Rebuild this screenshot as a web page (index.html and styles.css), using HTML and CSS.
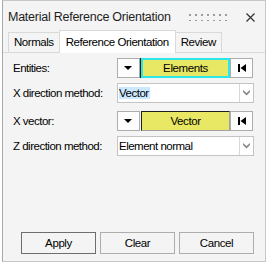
FILE: index.html
```html
<!DOCTYPE html>
<html>
<head>
    <title>Material Reference Orientation</title>
    <link rel="stylesheet" href="styles.css">
</head>
<body>
    <div class="window">
        <div class="titlebar">
            <span class="title">Material Reference Orientation</span>
            <span class="grip"></span>
            <svg class="close" width="9" height="9" viewBox="0 0 9 9">
                <path d="M0.5 0.5 L8.5 8.5 M8.5 0.5 L0.5 8.5" stroke="#333" stroke-width="1.2"/>
            </svg>
        </div>

        <div class="tabs">
            <div class="tab">Normals</div>
            <div class="tab active">Reference Orientation</div>
            <div class="tab">Review</div>
        </div>

        <div class="panel">
            <div class="row">
                <label>Entities:</label>
                <div class="picker">
                    <button class="drop"><span class="tri"></span></button>
                    <button class="entity selected">Elements</button>
                    <button class="reset">
                        <svg width="8" height="8" viewBox="0 0 8 8"><rect x="0" y="0" width="2" height="8" fill="#000"/><path d="M8 0 L2.5 4 L8 8 Z" fill="#000"/></svg>
                    </button>
                </div>
            </div>
            <div class="row gap-wide">
                <label>X direction method:</label>
                <div class="combo">
                    <span class="value"><span class="highlight">Vector</span></span>
                    <span class="arrow">
                        <svg width="7" height="6" viewBox="0 0 7 6"><path d="M0 0 L3.5 3 L7 0 L7 2 L3.5 5.5 L0 2 Z" fill="#8a8a8a"/></svg>
                    </span>
                </div>
            </div>
            <div class="row">
                <label>X vector:</label>
                <div class="picker">
                    <button class="drop"><span class="tri"></span></button>
                    <button class="entity">Vector</button>
                    <button class="reset">
                        <svg width="8" height="8" viewBox="0 0 8 8"><rect x="0" y="0" width="2" height="8" fill="#000"/><path d="M8 0 L2.5 4 L8 8 Z" fill="#000"/></svg>
                    </button>
                </div>
            </div>
            <div class="row">
                <label>Z direction method:</label>
                <div class="combo">
                    <span class="value">Element normal</span>
                    <span class="arrow">
                        <svg width="7" height="6" viewBox="0 0 7 6"><path d="M0 0 L3.5 3 L7 0 L7 2 L3.5 5.5 L0 2 Z" fill="#8a8a8a"/></svg>
                    </span>
                </div>
            </div>

            <div class="actions">
                <button class="btn default">Apply</button>
                <button class="btn">Clear</button>
                <button class="btn">Cancel</button>
            </div>
        </div>
    </div>
</body>
</html>
```

FILE: styles.css
```css
* {
    box-sizing: border-box;
}
body {
    margin: 0;
    background: #ffffff;
    font-family: "Liberation Sans", Arial, sans-serif;
    font-size: 11.5px;
    color: #000;
}
.window {
    width: 264px;
    height: 262px;
    margin-left: 2px;
    border: 1px solid #c8c8c8;
    border-left-color: #a8a8a8;
    background: #f4f4f4;
    display: flex;
    flex-direction: column;
}
.titlebar {
    height: 29px;
    display: flex;
    align-items: center;
    padding: 2px 0 0 5px;
}
.title {
    font-size: 12.5px;
    color: #1e1e1e;
    letter-spacing: -0.25px;
}
.grip {
    margin-left: auto;
    width: 40px;
    height: 8px;
    margin-top: 1px;
    background-image: radial-gradient(circle, #9a9a9a 1px, transparent 1.2px);
    background-size: 6px 6px;
    background-position: -2px -1px;
}
.close {
    margin: 1px 10px 0 17px;
}
.tabs {
    display: flex;
    align-items: flex-end;
    padding-left: 5px;
    height: 22px;
    position: relative;
    z-index: 1;
}
.tab {
    height: 20px;
    padding: 0 5px;
    border: 1px solid #d9d9d9;
    border-bottom: none;
    background: #f4f4f4;
    line-height: 19px;
    letter-spacing: -0.45px;
}
.tab + .tab {
    margin-left: -1px;
}
.tab.active {
    height: 23px;
    background: #ffffff;
    padding: 0 6px;
    line-height: 22px;
    margin-bottom: -1px;
}
.panel {
    flex: 1;
    border-top: 1px solid #d9d9d9;
    padding: 5px 11px 7px 10px;
    display: flex;
    flex-direction: column;
}
.row {
    display: flex;
    align-items: center;
    height: 20px;
    margin-bottom: 5px;
}
.row.gap-wide {
    margin-bottom: 8px;
}
.row label {
    width: 104px;
    letter-spacing: -0.5px;
}
.picker {
    display: flex;
    height: 20px;
    width: 136px;
}
.picker button {
    height: 20px;
    border: 1px solid #adadad;
    background: #fdfdfd;
    padding: 0;
    font-family: inherit;
}
.drop {
    width: 23px;
    display: flex;
    align-items: center;
    justify-content: center;
}
.tri {
    width: 0;
    height: 0;
    border-left: 4px solid transparent;
    border-right: 4px solid transparent;
    border-top: 4px solid #000;
}
.picker .entity {
    width: 90px;
    margin-left: 1px;
    background: #e8e864;
    border-color: #1e1e1e #a0a0a0 #a0a0a0 #1e1e1e;
    font-size: 11.5px;
    letter-spacing: -0.4px;
}
.picker .entity.selected {
    border: 2px solid #2ee6e6;
    box-shadow: -1px 0 0 #1e1e1e;
}
.reset {
    width: 23px;
    display: flex;
    align-items: center;
    justify-content: center;
}
.combo {
    display: flex;
    width: 137px;
    height: 20px;
    border: 1px solid #c4c4c4;
    background: #ffffff;
}
.value {
    flex: 1;
    padding-left: 1px;
    line-height: 18px;
    letter-spacing: -0.5px;
}
.highlight {
    background: #cce8ff;
    padding-right: 1px;
}
.arrow {
    width: 14px;
    border-left: 1px solid #d8d8d8;
    display: flex;
    align-items: center;
    justify-content: center;
}
.actions {
    margin-top: auto;
    display: flex;
    gap: 4px;
    padding-left: 8px;
}
.btn {
    width: 76px;
    height: 22px;
    border: 1px solid #adadad;
    background: #f4f4f4;
    font-family: inherit;
    font-size: 11.5px;
    letter-spacing: -0.4px;
    padding: 0;
}
.btn.default {
    border-color: #6e6e6e;
}
```
